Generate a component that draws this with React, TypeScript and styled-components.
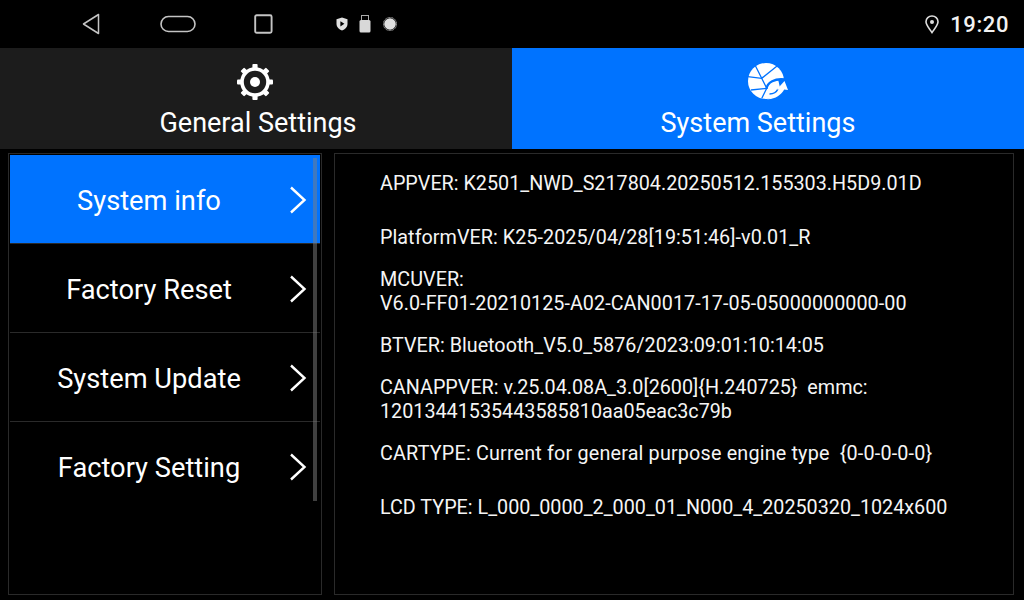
import React from "react";
import styled, { createGlobalStyle } from "styled-components";

const GlobalStyle = createGlobalStyle`
  html, body {
    margin: 0;
    padding: 0;
    background: #000;
  }
  body {
    font-family: Roboto, "Liberation Sans", sans-serif;
    color: #fff;
  }
`;

const Screen = styled.div`
  width: 1024px;
  height: 600px;
  display: flex;
  flex-direction: column;
  overflow: hidden;
  background: #000;
`;

const StatusBar = styled.div`
  height: 48px;
  flex: none;
  display: flex;
  align-items: center;
  padding: 0 15px 0 82px;
  box-sizing: border-box;
`;

const NavIcon = styled.svg<{ $left?: number }>`
  display: block;
  flex: none;
  margin-left: ${(p) => p.$left ?? 0}px;
`;

const Clock = styled.span`
  margin-left: 11px;
  font-size: 22px;
  font-weight: 500;
  letter-spacing: 0.6px;
  color: #f2f2f2;
`;

const Spacer = styled.div`
  flex: 1;
`;

const TabBar = styled.div`
  height: 101px;
  flex: none;
  display: grid;
  grid-template-columns: 512px 512px;
`;

const Tab = styled.div<{ $active?: boolean }>`
  display: flex;
  flex-direction: column;
  align-items: center;
  padding-top: 14px;
  box-sizing: border-box;
  background: ${(p) => (p.$active ? "#0073ff" : "#1c1c1c")};
  font-size: 27px;
  line-height: 34px;
  color: #fff;
`;

const TabIcon = styled.svg`
  display: block;
  height: 40px;
  margin: 0 2px 4px 0;
`;

const TabLabel = styled.span<{ $left?: number; $right?: number }>`
  margin-left: ${(p) => p.$left ?? 0}px;
  margin-right: ${(p) => p.$right ?? 0}px;
`;

const Content = styled.div`
  flex: 1;
  display: grid;
  grid-template-columns: 314px 680px;
  column-gap: 12px;
  padding: 4px 10px 5px 8px;
  min-height: 0;
`;

const Panel = styled.div`
  position: relative;
  border: 1px solid #2a2a2a;
  box-sizing: border-box;
`;

const Menu = styled(Panel)`
  padding: 1px 1px 0 1px;
`;

const MenuItem = styled.div<{ $active?: boolean }>`
  height: 88px;
  display: grid;
  grid-template-columns: 279px 31px;
  align-items: center;
  background: ${(p) => (p.$active ? "#0073ff" : "transparent")};
  font-size: 27.25px;
  color: #fff;

  & + & {
    border-top: 1px solid #2a2a2a;
  }
`;

const MenuLabel = styled.span`
  text-align: center;
  padding: 4px 1px 0 0;
`;

const ChevronIcon = styled.svg`
  display: block;
  margin-top: 2px;
`;

const Scrollbar = styled.div`
  position: absolute;
  top: 4px;
  right: 4px;
  width: 4px;
  height: 343px;
  background: rgba(128, 128, 128, 0.5);
`;

const InfoPanel = styled(Panel)`
  padding: 18px 0 0 45px;
`;

const InfoRow = styled.div<{ $gap?: number; $spacing?: number }>`
  font-size: 19.75px;
  line-height: 24px;
  color: #f5f5f5;
  white-space: pre;
  letter-spacing: ${(p) => p.$spacing ?? 0}px;
  margin-bottom: ${(p) => p.$gap ?? 18}px;
`;

const Chevron = () => (
  <ChevronIcon width="18" height="28" viewBox="0 0 18 28" fill="none">
    <path d="M2 1.5 L15.5 14 L2 26.5" stroke="#fff" strokeWidth="2.4" />
  </ChevronIcon>
);

const GearIcon = () => {
  const teeth = [0, 45, 90, 135, 180, 225, 270, 315];
  return (
    <TabIcon width="40" viewBox="0 0 40 40">
      <circle cx="20" cy="20" r="13" fill="none" stroke="#fff" strokeWidth="3.6" />
      <circle cx="20" cy="20" r="5" fill="#fff" />
      {teeth.map((a) => (
        <rect key={a} x="17.4" y="2" width="5.2" height="5.5" rx="1" fill="#fff" transform={`rotate(${a} 20 20)`} />
      ))}
    </TabIcon>
  );
};

const GlobeIcon = () => (
  <TabIcon width="42" viewBox="0 0 42 40">
    <circle cx="20" cy="19" r="18" fill="#fff" />
    <g fill="none" stroke="#0073ff" strokeWidth="1.3">
      <path d="M1.7 14.7 L15.7 16.3 L32.3 3" />
      <path d="M9 3 L15.7 16.3 L20.7 26.3 L15.7 36.5" />
      <path d="M5 28 L20.7 26.3" />
    </g>
    <path d="M20.5 27 C21 20.5 29 16 39 17.5" fill="none" stroke="#0073ff" strokeWidth="2.4" />
    <path d="M23.5 32 C28 32 30.5 30 32 27" fill="none" stroke="#0073ff" strokeWidth="1.6" />
    <path d="M32 17 L42 17 L42 30 L35 30 Z" fill="#0073ff" />
    <path d="M38.5 19 L42 28 L38.2 27.6 C35 33 29.5 37.5 21 37.2 C27 36 31.5 32.5 33.8 27.6 L30.8 27.6 Z" fill="#fff" />
  </TabIcon>
);

const items = ["System info", "Factory Reset", "System Update", "Factory Setting"];

const App: React.FC = () => {
  return (
    <Screen>
      <GlobalStyle />
      <StatusBar>
        <NavIcon width="18" height="22" viewBox="0 0 18 22" fill="none">
          <path d="M16.5 1.5 V20.5 L1.5 11 Z" stroke="#c4c4c4" strokeWidth="1.5" strokeLinejoin="round" />
        </NavIcon>
        <NavIcon $left={60} width="36" height="18" viewBox="0 0 36 18" fill="none">
          <rect x="1" y="1.5" width="34" height="15" rx="7.5" stroke="#c4c4c4" strokeWidth="1.6" />
        </NavIcon>
        <NavIcon $left={58} width="19" height="20" viewBox="0 0 19 20" fill="none">
          <rect x="1.2" y="1.2" width="16.4" height="17.6" rx="1.5" stroke="#c4c4c4" strokeWidth="1.9" />
        </NavIcon>
        <NavIcon $left={63} width="12" height="14" viewBox="0 0 12 14">
          <path d="M6 .5 L11.5 2.2 V7 C11.5 10 9 12.5 6 13.5 C3 12.5 .5 10 .5 7 V2.2 Z" fill="#e0e0e0" />
          <path d="M4.4 4.2 L8.4 6.8 L4.4 9.4 Z" fill="#000" />
        </NavIcon>
        <NavIcon $left={11} width="12" height="18" viewBox="0 0 12 18">
          <rect x="2.5" y=".5" width="7" height="6" fill="none" stroke="#aaa" strokeWidth="1" />
          <rect x=".5" y="5" width="11" height="12.5" rx="1.5" fill="#d8d8d8" />
        </NavIcon>
        <NavIcon $left={12} width="14" height="14" viewBox="0 0 14 14">
          <circle cx="7" cy="7" r="6.6" fill="none" stroke="#ddd" strokeWidth=".8" strokeDasharray="1 .5" />
          <circle cx="7" cy="7" r="5.8" fill="#e0e0e0" />
        </NavIcon>
        <Spacer />
        <NavIcon width="14" height="19" viewBox="0 0 14 19" fill="none">
          <path d="M7 17.5 C4 13 1 10.2 1 6.8 C1 3.5 3.7 1 7 1 C10.3 1 13 3.5 13 6.8 C13 10.2 10 13 7 17.5 Z" stroke="#dedede" strokeWidth="1.6" />
          <circle cx="7" cy="7" r="2" fill="#dedede" />
        </NavIcon>
        <Clock>19:20</Clock>
      </StatusBar>

      <TabBar>
        <Tab>
          <GearIcon />
          <TabLabel $left={4}>General Settings</TabLabel>
        </Tab>
        <Tab $active>
          <GlobeIcon />
          <TabLabel $right={20}>System Settings</TabLabel>
        </Tab>
      </TabBar>

      <Content>
        <Menu>
          {items.map((label, i) => (
            <MenuItem key={label} $active={i === 0}>
              <MenuLabel>{label}</MenuLabel>
              <Chevron />
            </MenuItem>
          ))}
          <Scrollbar />
        </Menu>
        <InfoPanel>
          <InfoRow $gap={30}>APPVER: K2501_NWD_S217804.20250512.155303.H5D9.01D</InfoRow>
          <InfoRow $spacing={0.04}>PlatformVER: K25-2025/04/28[19:51:46]-v0.01_R</InfoRow>
          <InfoRow $spacing={0.04}>
            MCUVER:
            <br />
            V6.0-FF01-20210125-A02-CAN0017-17-05-05000000000-00
          </InfoRow>
          <InfoRow>BTVER: Bluetooth_V5.0_5876/2023:09:01:10:14:05</InfoRow>
          <InfoRow>
            {"CANAPPVER: v.25.04.08A_3.0[2600]{H.240725}  emmc:"}
            <br />
            12013441535443585810aa05eac3c79b
          </InfoRow>
          <InfoRow $gap={30} $spacing={0.18}>{"CARTYPE: Current for general purpose engine type  {0-0-0-0-0}"}</InfoRow>
          <InfoRow>LCD TYPE: L_000_0000_2_000_01_N000_4_20250320_1024x600</InfoRow>
        </InfoPanel>
      </Content>
    </Screen>
  );
};

export default App;
